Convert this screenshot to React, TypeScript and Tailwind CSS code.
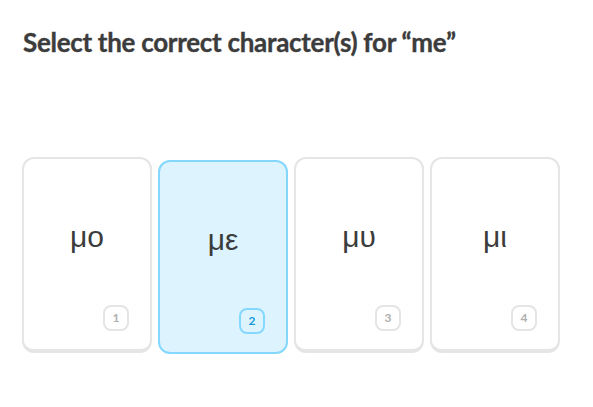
import React from "react";

const options = [
  { text: "μο", n: 1 },
  { text: "με", n: 2, selected: true },
  { text: "μυ", n: 3 },
  { text: "μι", n: 4 },
];

function Card({ text, n, selected }: { text: string; n: number; selected?: boolean }) {
  return (
    <div
      className={
        selected
          ? "w-[130px] h-[194px] mt-[3px] flex flex-col rounded-[12px] border-2 border-[#84d8ff] bg-[#ddf4ff]"
          : "w-[130px] h-[196px] flex flex-col rounded-[12px] border-2 border-b-4 border-[#e5e5e5] bg-white"
      }
    >
      <div className="pt-[63px] text-center text-[30px] leading-[30px] text-[#3c3c3c] font-['Liberation_Sans',Arial,sans-serif]">
        {text}
      </div>
      <div className="mt-auto flex justify-end pr-[21px] pb-[18px]">
        <div
          className={
            selected
              ? "w-[26px] h-[26px] rounded-[8px] border-2 border-[#84d8ff] flex items-center justify-center text-[12px] font-bold text-[#1899d6] font-['Lato',sans-serif]"
              : "w-[26px] h-[26px] rounded-[8px] border-2 border-[#e5e5e5] flex items-center justify-center text-[12px] font-bold text-[#afafaf] font-['Lato',sans-serif]"
          }
        >
          {n}
        </div>
      </div>
    </div>
  );
}

export default function App() {
  return (
    <div className="w-[593px] h-[407px] bg-white pl-[22px] pt-[26px]">
      <h1 className="pl-[1px] text-[26px] tracking-[-0.3px] font-bold leading-[32px] text-[#3c3c3c] [-webkit-text-stroke:0.35px_#3c3c3c] font-['Lato','Liberation_Sans',sans-serif]">
        Select the correct character(s) for “me”
      </h1>
      <div className="mt-[99px] flex items-start gap-[6px] w-[538px]">
        {options.map((o) => (
          <Card key={o.n} text={o.text} n={o.n} selected={o.selected} />
        ))}
      </div>
    </div>
  );
}
